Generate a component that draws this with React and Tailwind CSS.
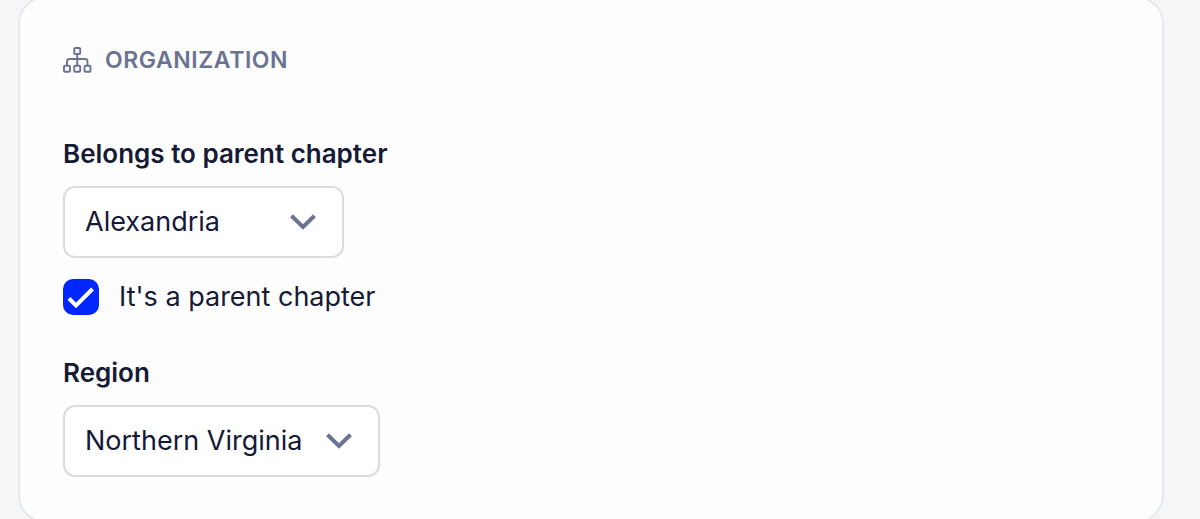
import { useState } from 'react';

const parentChapters = ['Alexandria', 'Arlington', 'Fairfax'];
const regions = ['Northern Virginia', 'Central Virginia', 'Hampton Roads'];

function SitemapIcon() {
  return (
    <svg viewBox="0 0 30 26" className="w-[30px] h-[26px] shrink-0" fill="none" stroke="currentColor" strokeWidth="1.9" aria-hidden="true">
      <rect x="11.200" y="1" width="6" height="6" rx="1" />
      <rect x="1" y="18.800" width="6" height="6" rx="1" />
      <rect x="11.200" y="18.800" width="6" height="6" rx="1" />
      <rect x="21.500" y="18.800" width="6" height="6" rx="1" />
      <path d="M14.200 7v12M4 19v-4.500a2.500 2.500 0 0 1 2.500-2.500h15.500a2.500 2.500 0 0 1 2.500 2.500v4.500" />
    </svg>
  );
}

function SelectField({ id, label, options, value, onChange, width }) {
  return (
    <div className="flex flex-col items-start gap-4">
      <label htmlFor={id} className="text-[26px] leading-8 font-semibold">
        {label}
      </label>
      <div className={`grid items-center max-w-full ${width}`}>
        <select
          id={id}
          value={value}
          onChange={(e) => onChange(e.target.value)}
          className="col-start-1 row-start-1 w-full h-[72px] appearance-none rounded-xl border-2 border-[#dcdce0] bg-white pl-5 pr-16 text-[27px] leading-9 text-[#14193a]"
        >
          {options.map((option) => (
            <option key={option}>{option}</option>
          ))}
        </select>
        <svg
          viewBox="0 0 26 16"
          className="col-start-1 row-start-1 justify-self-end w-[26px] h-4 mr-7 pointer-events-none text-[#6b7394]"
          fill="none"
          stroke="currentColor"
          strokeWidth="4"
          aria-hidden="true"
        >
          <path d="M1.500 1.800 13 13 24.500 1.800" />
        </svg>
      </div>
    </div>
  );
}

export default function App() {
  const [chapter, setChapter] = useState('Alexandria');
  const [region, setRegion] = useState('Northern Virginia');
  const [isParent, setIsParent] = useState(true);

  return (
    <main className="h-screen overflow-hidden bg-[#f4f6f8] pl-[18px] pr-9 font-['Inter',sans-serif] text-[#151b35]">
      <section className="-mt-1 rounded-[28px] border-2 border-[#e6e8eb] bg-[#fdfdfe] px-[43px] py-11">
        <h2 className="flex items-center gap-3 mb-[60px] text-[23px] leading-9 font-semibold tracking-wide uppercase text-[#6b7394]">
          <SitemapIcon />
          Organization
        </h2>

        <SelectField
          id="parent-chapter"
          label="Belongs to parent chapter"
          options={parentChapters}
          value={chapter}
          onChange={setChapter}
          width="w-[281px]"
        />

        <label className="flex items-center w-fit gap-5 mt-[21px] mb-[42px] text-[27px] leading-9">
          <span className="grid shrink-0">
            <input
              type="checkbox"
              checked={isParent}
              onChange={(e) => setIsParent(e.target.checked)}
              className="peer col-start-1 row-start-1 size-9 appearance-none rounded-[10px] border-2 border-[#dcdce0] bg-white checked:border-[#0027ff] checked:bg-[#0027ff]"
            />
            <svg
              viewBox="0 0 36 36"
              className="col-start-1 row-start-1 size-9 pointer-events-none text-white opacity-0 peer-checked:opacity-100"
              fill="none"
              stroke="currentColor"
              strokeWidth="4"
              aria-hidden="true"
            >
              <path d="M6 19.500 13 26.500 29.500 10" />
            </svg>
          </span>
          It's a parent chapter
        </label>

        <SelectField
          id="region"
          label="Region"
          options={regions}
          value={region}
          onChange={setRegion}
          width="w-[317px]"
        />
      </section>
    </main>
  );
}
